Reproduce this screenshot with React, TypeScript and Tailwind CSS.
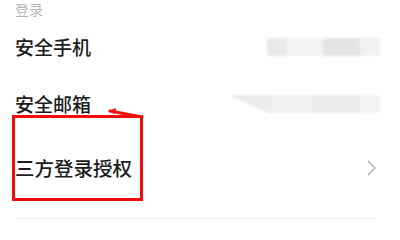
import React from "react";

export default function App() {
  return (
    <div
      className="relative w-[400px] h-[225px] overflow-hidden bg-white"
      style={{ fontFamily: '"Noto Sans CJK SC", "Noto Sans", sans-serif' }}
    >
      <div className="flex flex-col pl-[15px]">
        <div className="h-[18px] flex items-center text-[14px] leading-[18px] text-[#b4b4b4]">
          登录
        </div>
        <div className="h-[58px] flex items-center justify-between pr-[20px]">
          <span className="text-[19px] leading-[24px] font-medium text-[#1c1c1c]">安全手机</span>
          <div className="flex h-[18px] w-[113px] blur-[1px]">
            <div className="w-[20px] bg-[#e9e9e9]" />
            <div className="w-[36px] bg-[#f3f3f3]" />
            <div className="w-[37px] bg-[#e5e5e5]" />
            <div className="w-[20px] bg-[#f1f1f1]" />
          </div>
        </div>
        <div className="h-[56px] flex items-center justify-between pr-[20px]">
          <span className="text-[19px] leading-[24px] font-medium text-[#1c1c1c]">安全邮箱</span>
          <div className="flex h-[18px] w-[152px] blur-[1px]">
            <div
              className="w-[45px] bg-[#ececec]"
              style={{ clipPath: "polygon(0 0, 100% 0, 100% 100%, 90% 100%)" }}
            />
            <div className="w-[40px] bg-[#f0f0f0]" />
            <div className="w-[47px] bg-[#ebebeb]" />
            <div className="w-[20px] bg-[#f2f2f2]" />
          </div>
        </div>
        <div className="h-[72px] flex items-center justify-between pr-[23px]">
          <span className="text-[19.5px] leading-[24px] font-medium text-[#1c1c1c]">三方登录授权</span>
          <svg width="10" height="16" viewBox="0 0 10 16" fill="none">
            <path d="M1.5 1.5 L8 8 L1.5 14.5" stroke="#a8a8a8" strokeWidth="1.3" strokeLinecap="round" strokeLinejoin="round" />
          </svg>
        </div>
        <div className="h-[14px]" />
        <div className="h-[1px] w-[360px] bg-[#ececec]" />
      </div>

      <div className="absolute left-[12px] top-[115px] w-[131px] h-[86px] border-[3px] border-[#f10d0d]" />
      <svg className="absolute left-0 top-0" width="400" height="225" viewBox="0 0 400 225" fill="none">
        <path d="M142 117 L110 111" stroke="#f10d0d" strokeWidth="3" strokeLinecap="round" />
        <path d="M108 111 L116 108 L115 114 Z" fill="#f10d0d" />
      </svg>
    </div>
  );
}
